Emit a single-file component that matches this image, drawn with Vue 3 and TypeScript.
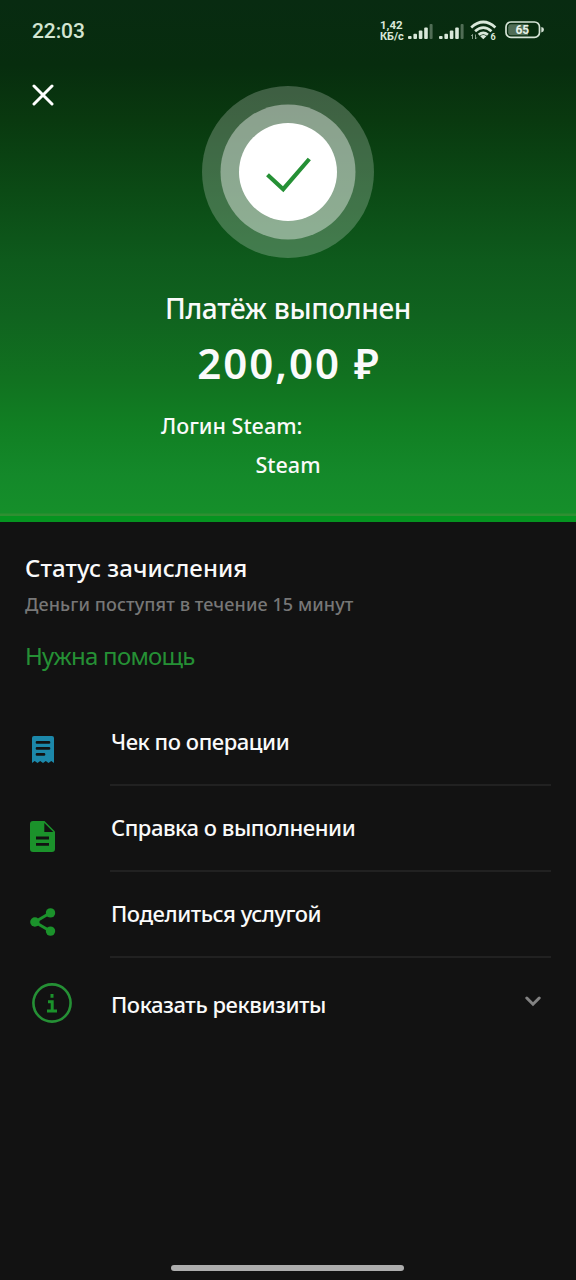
<script setup lang="ts">
interface Action {
  label: string
  icon: 'receipt' | 'document' | 'share'
}

const actions: Action[] = [
  { label: 'Чек по операции', icon: 'receipt' },
  { label: 'Справка о выполнении', icon: 'document' },
  { label: 'Поделиться услугой', icon: 'share' },
]
</script>

<template>
  <main class="screen">
    <section class="hero">
      <header class="status">
        <span class="clock">22:03</span>
        <div class="indicators">
          <span class="speed"><span class="rate">1,42</span><span>КБ/с</span></span>
          <svg v-for="n in 2" :key="n" class="signal" width="26" height="18" viewBox="0 0 26 18">
            <g fill="#d9e8da">
              <rect x="0" y="13" width="3.6" height="3" rx="1" />
              <rect x="5.4" y="10.8" width="3.6" height="5.2" rx="1" />
              <rect x="10.8" y="7.6" width="3.6" height="8.4" rx="1" />
              <rect x="16.2" y="4.4" width="3.6" height="11.6" rx="1" />
              <rect x="21.6" y="1" width="3" height="15" rx="1" opacity=".35" />
            </g>
          </svg>
          <svg class="wifi" width="27" height="22" viewBox="0 0 27 22">
            <g fill="none" stroke="#d9e8da" stroke-width="2.7">
              <path d="M1.2 7.4Q13.3-3.4 25.4 7.4" />
              <path d="M5.1 11.3Q13.3 4 21.5 11.3" />
              <path d="M8.7 14.8Q13.3 10.8 17.9 14.8" />
            </g>
            <path d="M10.2 16.2Q13.3 13.8 16.4 16.2L13.3 19.3Z" fill="#d9e8da" />
            <path d="M2.5 19v-4.5M1.2 16l1.3-1.5M5.5 14.5V19M5.5 19l1.3-1.5" stroke="#d9e8da" opacity=".6" fill="none" />
            <text x="20.5" y="20.4" class="band">6</text>
          </svg>
          <svg class="battery" width="39" height="18" viewBox="0 0 39 18">
            <rect x="1" y="1" width="33.5" height="15.4" rx="5" fill="none" stroke="#d5e3d6" stroke-width="1.7" />
            <path d="M6 3.2H23V14.2H6Q3.2 14.2 3.2 11.2V6.2Q3.2 3.2 6 3.2Z" fill="#d9e8da" opacity=".35" />
            <path d="M36.3 6Q39 6.4 39 8.7Q39 11 36.3 11.4Z" fill="#d5e3d6" />
            <text x="17.3" y="13.2" text-anchor="middle" class="percent">65</text>
          </svg>
        </div>
      </header>
      <button class="close" aria-label="Закрыть">
        <svg width="22" height="22" viewBox="0 0 22 22">
          <path d="M2 2L20 20M20 2L2 20" stroke="#fff" stroke-width="3" stroke-linecap="round" />
        </svg>
      </button>
      <svg class="success" width="172" height="172" viewBox="0 0 172 172">
        <circle cx="86" cy="86" r="86" fill="#fff" fill-opacity=".22" />
        <circle cx="86" cy="86" r="67.5" fill="#fff" fill-opacity=".4" />
        <circle cx="86" cy="86" r="49" fill="#fff" />
        <path d="M65.5 88.7L81.2 103.2L107.3 73" fill="none" stroke="#259035" stroke-width="4.2" />
      </svg>
      <h1 class="title">Платёж выполнен</h1>
      <p class="amount">200,00 ₽</p>
      <p class="login">Логин Steam:</p>
      <p class="service">Steam</p>
    </section>

    <section class="credit">
      <h2>Статус зачисления</h2>
      <p>Деньги поступят в течение 15 минут</p>
      <a>Нужна помощь</a>
    </section>

    <ul class="actions">
      <li v-for="item in actions" :key="item.icon">
        <svg v-if="item.icon === 'receipt'" class="icon receipt" width="22" height="28" viewBox="0 0 22 28">
          <path d="M2 0H20Q22 0 22 2V27L19.3 25L16.5 27L13.8 25L11 27L8.2 25L5.5 27L2.7 25L0 27V2Q0 0 2 0Z" fill="#1c88aa" />
          <path d="M5 6.4H17M5 12.4H17M5 18.4H12" stroke="#121212" stroke-width="2.7" stroke-linecap="round" />
        </svg>
        <svg v-else-if="item.icon === 'document'" class="icon document" width="25" height="31" viewBox="0 0 25 31">
          <path d="M3 0H14.5L25 10.5V28Q25 31 22 31H3Q0 31 0 28V3Q0 0 3 0Z" fill="#1b922b" />
          <path d="M14.3 2V11H23.3Z" fill="#121212" />
          <path d="M6 17H19M6 23.3H19" stroke="#121212" stroke-width="2.8" />
        </svg>
        <svg v-else class="icon share" width="26" height="28" viewBox="0 0 26 28">
          <path d="M20.5 4.8L4.8 14L20.5 23.2" fill="none" stroke="#1b922b" stroke-width="3" />
          <circle cx="20.5" cy="4.9" r="4.7" fill="#1b922b" />
          <circle cx="4.9" cy="14" r="4.7" fill="#1b922b" />
          <circle cx="20.5" cy="23.1" r="4.7" fill="#1b922b" />
        </svg>
        <span class="label">{{ item.label }}</span>
      </li>
    </ul>

    <div class="details">
      <svg class="info" width="40" height="40" viewBox="0 0 40 40">
        <circle cx="20" cy="20" r="18.6" fill="none" stroke="#259035" stroke-width="2.6" />
        <path d="M20 11V14.7M16 18.7H20.2V28M15 28H25" fill="none" stroke="#1b922b" stroke-width="3" />
      </svg>
      <span class="label">Показать реквизиты</span>
      <svg class="chevron" width="16" height="11" viewBox="0 0 16 11">
        <path d="M1.8 2L8 8.2L14.2 2" fill="none" stroke="#828282" stroke-width="3" stroke-linecap="round" />
      </svg>
    </div>

    <div class="home-bar"></div>
  </main>
</template>

<style>
body {
  margin: 0;
  background: #121212;
}
</style>

<style scoped>
.screen {
  width: 576px;
  height: 1280px;
  display: flex;
  flex-direction: column;
  background: #121212;
  color: #fafafa;
  font-family: "Noto Sans", "Open Sans", sans-serif;
  overflow: hidden;
}
h1, h2, p, ul {
  margin: 0;
  padding: 0;
  font-weight: 400;
  white-space: nowrap;
}
.hero {
  height: 522px;
  display: flex;
  flex-direction: column;
  flex-shrink: 0;
  background: linear-gradient(#082b11 0, #072d0e 65px, #09390f 120px, #0b4a15 190px, #0e5a1c 260px, #10631f 315px, #117220 380px, #117f23 425px, #14892a 475px, #158f2a 513px, #2f8f32 514px, #2f8f32 516px, #059420 516px);
}
.status {
  height: 60px;
  display: flex;
  justify-content: space-between;
  padding: 0 32px;
}
.clock {
  font: 500 21px/62px Roboto, sans-serif;
  letter-spacing: -0.1px;
  color: #d3e5d2;
}
.indicators {
  display: flex;
  align-items: flex-start;
}
.speed {
  width: 25px;
  margin: 20px 3px 0 0;
  display: flex;
  flex-direction: column;
  align-items: flex-start;
  font: 700 11px/11px Roboto, sans-serif;
  color: #d9e8da;
}
.rate {
  font-size: 11.5px;
}
.signal {
  margin: 23px 5px 0 0;
}
.wifi {
  margin: 20px 8px 0 0;
}
.band {
  font: 700 9px Roboto, sans-serif;
  fill: #d9e8da;
}
.battery {
  margin-top: 21px;
}
.percent {
  font: 700 12px Roboto, sans-serif;
  fill: #e6f0e6;
}
.close {
  width: 22px;
  height: 22px;
  margin: 24px 0 0 32px;
  padding: 0;
  border: 0;
  background: none;
}
.close svg {
  display: block;
}
.success {
  margin: -20.5px 0 0 202px;
}
.title {
  margin-top: 30.5px;
  text-align: center;
  font-size: 28px;
  font-weight: 500;
  line-height: 40px;
  letter-spacing: -0.3px;
}
.amount {
  margin-top: 11px;
  padding-left: 2px;
  text-align: center;
  font-size: 42px;
  font-weight: 600;
  line-height: 48px;
  letter-spacing: 2px;
}
.login {
  margin: 24px 0 0 161px;
  font-size: 21.5px;
  font-weight: 500;
  line-height: 30px;
}
.service {
  margin-top: 9px;
  text-align: center;
  font-size: 21.5px;
  font-weight: 500;
  line-height: 30px;
}
.credit {
  padding: 31px 25px 0;
  display: flex;
  flex-direction: column;
}
.credit h2 {
  font-size: 24px;
  font-weight: 500;
  line-height: 30px;
  letter-spacing: 0.06px;
}
.credit p {
  margin-top: 9px;
  font-size: 18px;
  font-weight: 500;
  line-height: 24px;
  letter-spacing: 0.1px;
  color: #777;
}
.credit a {
  margin-top: 25px;
  font-size: 24px;
  line-height: 30px;
  letter-spacing: -0.75px;
  color: #259035;
}
.actions {
  margin-top: 29px;
  padding: 0 25px 0 30px;
  list-style: none;
}
.actions li {
  height: 86px;
  display: flex;
  background: linear-gradient(#212121, #212121) 80px 84px / 441px 2px no-repeat;
}
.icon {
  flex-shrink: 0;
}
.receipt {
  margin: 36px 57px 0 2px;
}
.document {
  margin: 35px 56px 0 0;
}
.share {
  margin: 36px 55px 0 0;
}
.label {
  font-size: 22px;
  font-weight: 500;
  letter-spacing: -0.45px;
  white-space: nowrap;
}
.actions .label {
  margin-top: 26px;
  line-height: 30px;
}
.details {
  height: 89px;
  display: flex;
  align-items: center;
  padding: 0 35px 0 32px;
}
.details .label {
  flex: 1;
  margin: 2px 0 0 39px;
  line-height: 30px;
}
.chevron {
  margin-bottom: 2px;
}
.home-bar {
  width: 233px;
  height: 6px;
  margin: auto 0 9px 171px;
  border-radius: 3px;
  background: #adadad;
}
</style>
